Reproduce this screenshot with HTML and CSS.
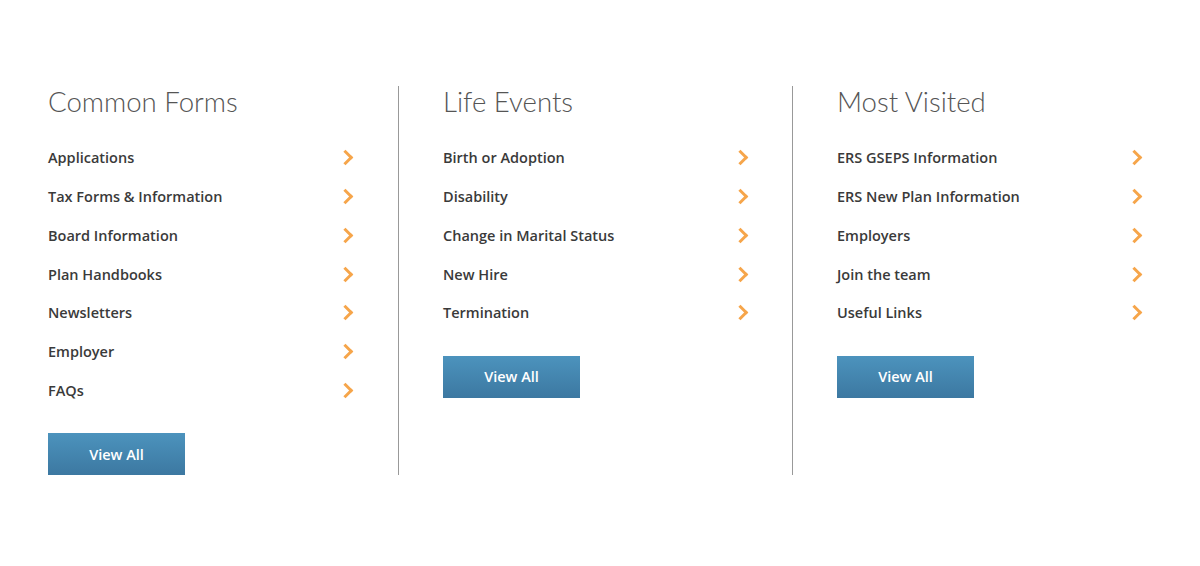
FILE: index.html
```html
<!DOCTYPE html>
<html>
<head>
<meta charset="utf-8">
<link rel="stylesheet" href="styles.css">
</head>
<body>
<div class="links">
  <section class="col">
    <h2 class="title">Common Forms</h2>
    <ul class="list">
      <li><a href="#">Applications<span class="chev"></span></a></li>
      <li><a href="#">Tax Forms &amp; Information<span class="chev"></span></a></li>
      <li><a href="#">Board Information<span class="chev"></span></a></li>
      <li><a href="#">Plan Handbooks<span class="chev"></span></a></li>
      <li><a href="#">Newsletters<span class="chev"></span></a></li>
      <li><a href="#">Employer<span class="chev"></span></a></li>
      <li><a href="#">FAQs<span class="chev"></span></a></li>
    </ul>
    <a class="btn" href="#">View All</a>
  </section>
  <section class="col">
    <h2 class="title">Life Events</h2>
    <ul class="list">
      <li><a href="#">Birth or Adoption<span class="chev"></span></a></li>
      <li><a href="#">Disability<span class="chev"></span></a></li>
      <li><a href="#">Change in Marital Status<span class="chev"></span></a></li>
      <li><a href="#">New Hire<span class="chev"></span></a></li>
      <li><a href="#">Termination<span class="chev"></span></a></li>
    </ul>
    <a class="btn" href="#">View All</a>
  </section>
  <section class="col last">
    <h2 class="title">Most Visited</h2>
    <ul class="list">
      <li><a href="#">ERS GSEPS Information<span class="chev"></span></a></li>
      <li><a href="#">ERS New Plan Information<span class="chev"></span></a></li>
      <li><a href="#">Employers<span class="chev"></span></a></li>
      <li><a href="#">Join the team<span class="chev"></span></a></li>
      <li><a href="#">Useful Links<span class="chev"></span></a></li>
    </ul>
    <a class="btn" href="#">View All</a>
  </section>
</div>
</body>
</html>
```
FILE: styles.css
```css
html, body {
  margin: 0;
  padding: 0;
  background: #fff;
}
body {
  font-family: "Open Sans", "Liberation Sans", sans-serif;
  color: #333;
}
.links {
  display: flex;
  align-items: stretch;
  padding: 86px 0 0 48px;
}
.col {
  width: 305px;
  padding-right: 45px;
  border-right: 1px solid #999;
}
.col + .col {
  padding-left: 44px;
  padding-right: 44px;
}
.col.last {
  border-right: none;
}
.title {
  margin: 0;
  font-family: "Lato", sans-serif;
  font-weight: 300;
  font-size: 27.6px;
  line-height: 32px;
  color: #555;
}
.list {
  list-style: none;
  margin: 20.6px 0 0;
  padding: 0;
}
.list li a {
  display: flex;
  justify-content: space-between;
  align-items: center;
  height: 38.7px;
  text-decoration: none;
  color: #3a3a3a;
  font-size: 14.5px;
  font-weight: 600;
}
.chev {
  width: 8px;
  height: 8px;
  border-top: 3px solid #f6a54a;
  border-right: 3px solid #f6a54a;
  transform: rotate(45deg);
  margin-right: 2px;
}
.btn {
  display: flex;
  align-items: center;
  justify-content: center;
  margin-top: 23.6px;
  width: 137px;
  height: 42px;
  background: linear-gradient(#4c93bd, #3c78a1);
  color: #fff;
  text-decoration: none;
  font-size: 14.5px;
  font-weight: 600;
}
```
